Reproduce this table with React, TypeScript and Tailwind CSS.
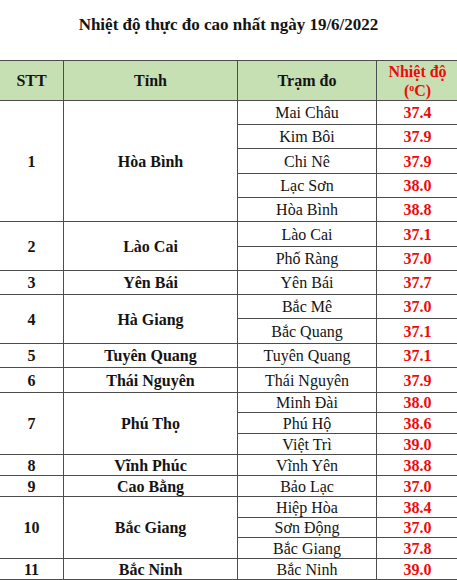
import { Fragment } from "react";

const groups = [
  { stt: "1", tinh: "Hòa Bình", rows: [["Mai Châu", "37.4"], ["Kim Bôi", "37.9"], ["Chi Nê", "37.9"], ["Lạc Sơn", "38.0"], ["Hòa Bình", "38.8"]] },
  { stt: "2", tinh: "Lào Cai", rows: [["Lào Cai", "37.1"], ["Phố Ràng", "37.0"]] },
  { stt: "3", tinh: "Yên Bái", rows: [["Yên Bái", "37.7"]] },
  { stt: "4", tinh: "Hà Giang", rows: [["Bắc Mê", "37.0"], ["Bắc Quang", "37.1"]] },
  { stt: "5", tinh: "Tuyên Quang", rows: [["Tuyên Quang", "37.1"]] },
  { stt: "6", tinh: "Thái Nguyên", rows: [["Thái Nguyên", "37.9"]] },
  { stt: "7", tinh: "Phú Thọ", rows: [["Minh Đài", "38.0"], ["Phú Hộ", "38.6"], ["Việt Trì", "39.0"]] },
  { stt: "8", tinh: "Vĩnh Phúc", rows: [["Vĩnh Yên", "38.8"]] },
  { stt: "9", tinh: "Cao Bằng", rows: [["Bảo Lạc", "37.0"]] },
  { stt: "10", tinh: "Bắc Giang", rows: [["Hiệp Hòa", "38.4"], ["Sơn Động", "37.0"], ["Bắc Giang", "37.8"]] },
  { stt: "11", tinh: "Bắc Ninh", rows: [["Bắc Ninh", "39.0"]] },
];

const spanClass: Record<number, string> = {
  1: "row-span-1",
  2: "row-span-2",
  3: "row-span-3",
  5: "row-span-5",
};

const cell = "flex items-center justify-center border-b border-r border-[#4d4d4d]";

export default function App() {
  return (
    <div
      className="h-[580px] w-[457px] overflow-hidden bg-white text-[#141414]"
      style={{ fontFamily: '"Liberation Serif", "Times New Roman", serif' }}
    >
      <div className="h-[60px] pt-[15px] text-center text-[17px] font-bold leading-[20px]">
        Nhiệt độ thực đo cao nhất ngày 19/6/2022
      </div>

      <div className="grid grid-cols-[64px_174px_139px_81px] grid-rows-[41px_24px_24px_25px_24px_24px_25px_24px_24px_24px_25px_24px_25px_20px_21px_21px_21px_21px_21px_20px_21px_21px] text-[16px] leading-[19px]">
        <div className={`${cell} border-t bg-[#c6e0b4] font-bold`}>STT</div>
        <div className={`${cell} border-t bg-[#c6e0b4] font-bold`}>Tỉnh</div>
        <div className={`${cell} border-t bg-[#c6e0b4] font-bold`}>Trạm đo</div>
        <div className="flex flex-col items-center justify-center border-b border-t border-[#4d4d4d] bg-[#c6e0b4] text-center font-bold text-[#ee0a0a]">
          <span>Nhiệt độ</span>
          <span>
            (<sup className="text-[10px]">o</sup>C)
          </span>
        </div>

        {groups.map((g) => (
          <Fragment key={g.stt}>
            <div className={`${cell} ${spanClass[g.rows.length]} font-bold`}>{g.stt}</div>
            <div className={`${cell} ${spanClass[g.rows.length]} font-bold`}>{g.tinh}</div>
            {g.rows.map(([tram, temp]) => (
              <Fragment key={tram}>
                <div className={`${cell} col-start-3`}>{tram}</div>
                <div className="flex items-center justify-center border-b border-[#4d4d4d] font-bold text-[#ee0a0a]">
                  {temp}
                </div>
              </Fragment>
            ))}
          </Fragment>
        ))}
      </div>
    </div>
  );
}
